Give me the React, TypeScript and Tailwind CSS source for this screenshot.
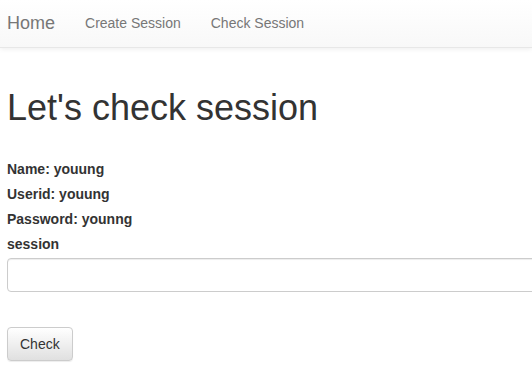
import React from "react";

const App: React.FC = () => {
  return (
    <div className="min-h-[377px] w-[532px] overflow-hidden bg-white font-['Liberation_Sans',Arial,sans-serif] text-[14px] text-[#333]">
      <nav className="flex h-[48px] items-center border-b border-[#e7e7e7] bg-gradient-to-b from-white to-[#f8f8f8] pb-[2px] pl-[7px] shadow-[0_1px_5px_rgba(0,0,0,0.075)]">
        <a className="pr-[15px] text-[18px] leading-[20px] text-[#777]">Home</a>
        <a className="px-[15px] leading-[20px] text-[#777]">Create Session</a>
        <a className="px-[15px] leading-[20px] text-[#777]">Check Session</a>
      </nav>

      <div className="pl-[7px]">
        <h1 className="mt-[40px] text-[36px] leading-[39.6px] text-[#333]">
          Let's check session
        </h1>
        <form className="mt-[31px]" onSubmit={(e) => e.preventDefault()}>
          <label className="mb-[5px] block font-bold leading-[20px]">Name: youung</label>
          <label className="mb-[5px] block font-bold leading-[20px]">Userid: youung</label>
          <label className="mb-[5px] block font-bold leading-[20px]">Password: younng</label>
          <label className="mb-[4px] block font-bold leading-[20px]">session</label>
          <input
            type="text"
            className="block h-[34px] w-[600px] rounded-[4px] border border-[#ccc] bg-white px-3 shadow-[inset_0_1px_1px_rgba(0,0,0,0.075)] outline-none"
          />
          <button
            type="submit"
            className="mt-[35px] h-[34px] rounded-[4px] border border-[#ccc] bg-gradient-to-b from-white to-[#e0e0e0] px-[12px] leading-[20px] text-[#333] shadow-[inset_0_1px_0_rgba(255,255,255,0.15),0_1px_1px_rgba(0,0,0,0.075)]"
          >
            Check
          </button>
        </form>
      </div>
    </div>
  );
};

export default App;
